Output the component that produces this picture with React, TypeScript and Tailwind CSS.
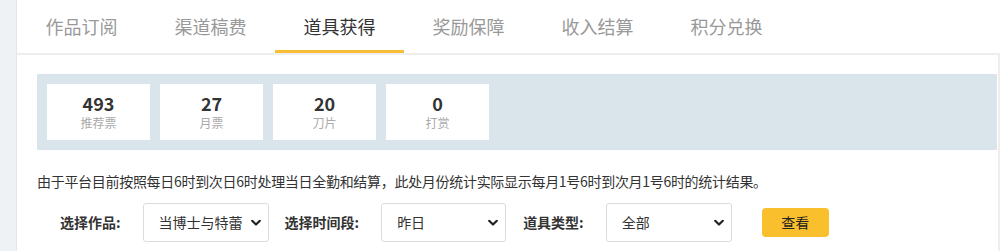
import React from 'react';

const tabs = ['作品订阅', '渠道稿费', '道具获得', '奖励保障', '收入结算', '积分兑换'];

const stats = [
  { value: '493', label: '推荐票' },
  { value: '27', label: '月票' },
  { value: '20', label: '刀片' },
  { value: '0', label: '打赏' },
];

function Chevron() {
  return (
    <svg width="10" height="7" viewBox="0 0 10 7" className="pointer-events-none absolute right-[8px] top-1/2 -translate-y-1/2">
      <path d="M1.2 1.3 L5 5 L8.8 1.3" fill="none" stroke="#222" strokeWidth="2.2" strokeLinecap="round" strokeLinejoin="round" />
    </svg>
  );
}

function Select({ value, className }: { value: string; className: string }) {
  return (
    <div className={`relative h-[39px] ${className}`}>
      <select
        defaultValue={value}
        className="h-full w-full appearance-none rounded-[3px] border border-[#dcdcdc] bg-white pl-[15px] pr-[26px] text-[14px] text-[#333] outline-none"
      >
        <option value={value}>{value}</option>
      </select>
      <Chevron />
    </div>
  );
}

export default function App() {
  return (
    <div className="flex h-[251px] w-[1000px] overflow-hidden bg-white font-['Noto_Sans_CJK_SC',sans-serif] text-[#333]">
      <div className="w-[17px] shrink-0 border-r border-[#e2e7eb] bg-[#eef2f5]" />
      <div className="flex min-w-0 flex-1 flex-col">
        <div className="flex h-[53px]">
          {tabs.map((t, i) => (
            <div
              key={t}
              className={
                i === 2
                  ? 'flex w-[129px] items-center justify-center border-b-[3px] border-[#f6bd35] pt-[3px] text-[18px] text-[#333]'
                  : 'flex w-[129px] items-center justify-center text-[18px] text-[#999]'
              }
            >
              {t}
            </div>
          ))}
        </div>
        <div className="flex-1 border-t-2 border-r-2 border-[#eeeeee] pl-[20px] pr-px">
          <div className="mt-[19px] flex h-[76px] gap-[10px] bg-[#d9e5ea] p-[10px]">
            {stats.map((s) => (
              <div key={s.label} className="flex w-[103px] flex-col items-center justify-center gap-[4px] bg-white">
                <div className="text-[18px] font-bold leading-[18px] text-[#333]">{s.value}</div>
                <div className="text-[12px] leading-[14px] text-[#aaa]">{s.label}</div>
              </div>
            ))}
          </div>
          <p className="mt-[21px] text-[14px] leading-[20px] tracking-[-0.3px] text-[#333]">
            由于平台目前按照每日6时到次日6时处理当日全勤和结算，此处月份统计实际显示每月1号6时到次月1号6时的统计结果。
          </p>
          <div className="mt-[12px] flex items-center text-[14px]">
            <span className="ml-[23px] font-bold">选择作品:</span>
            <Select value="当博士与特蕾西娅" className="ml-[22px] w-[126px]" />
            <span className="ml-[16px] font-bold">选择时间段:</span>
            <Select value="昨日" className="ml-[22px] w-[125px]" />
            <span className="ml-[17px] font-bold">道具类型:</span>
            <Select value="全部" className="ml-[22px] w-[126px]" />
            <button className="ml-[30px] h-[29px] w-[67px] rounded-[4px] bg-[#f9bf2c] text-[14px] text-[#222]">
              查看
            </button>
          </div>
        </div>
      </div>
    </div>
  );
}
